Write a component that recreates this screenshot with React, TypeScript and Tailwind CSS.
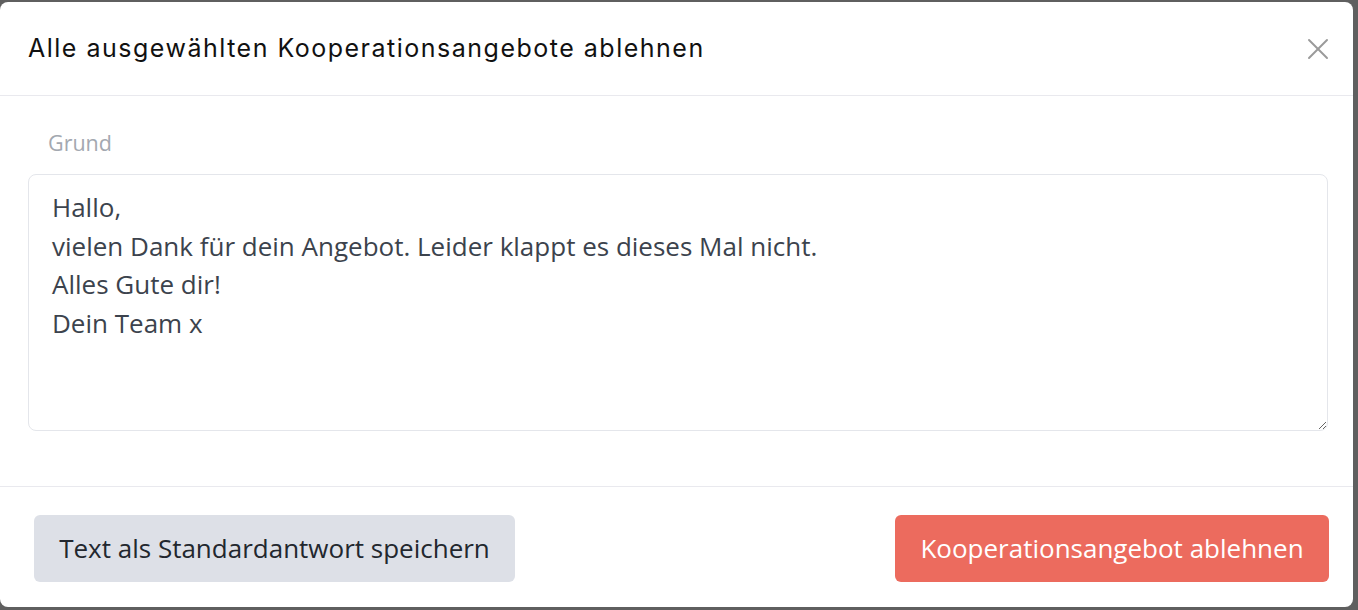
import { X } from 'lucide-react';

const reasonText = `Hallo,
vielen Dank für dein Angebot. Leider klappt es dieses Mal nicht.
Alles Gute dir!
Dein Team x`;

export default function App() {
  return (
    <div className="min-h-screen w-full bg-[#5f5f5f] pt-[2px]">
      <div className="flex h-[605px] w-[1353px] flex-col rounded-lg bg-white font-['Open_Sans',sans-serif]">
        {/* Header */}
        <div className="flex h-[94px] shrink-0 items-center justify-between border-b border-[#e9e9ee] pl-[28px] pr-[17px]">
          <h2 className="font-['Inter',sans-serif] text-[25px] font-normal tracking-[1.5px] text-[#111]">
            Alle ausgewählten Kooperationsangebote ablehnen
          </h2>
          <button type="button" className="text-[#9a9a9a]" aria-label="Schließen">
            <X size={36} strokeWidth={1.3} />
          </button>
        </div>

        {/* Body */}
        <div className="flex h-[390px] shrink-0 flex-col pl-[28px] pr-[25px] pt-[33px]">
          <label className="mb-[17px] pl-[20px] text-[21.5px] leading-[28px] text-[#a3a8b0]">
            Grund
          </label>
          <textarea
            defaultValue={reasonText}
            className="h-[257px] w-full resize-y rounded-lg border border-[#e4e6eb] pl-[23px] pt-[13px] text-[26px] leading-[38.5px] text-[#3c434d] outline-none"
          />
        </div>

        {/* Footer */}
        <div className="flex flex-1 items-start justify-between border-t border-[#e9e9ee] pl-[34px] pr-[24px] pt-[28px]">
          <button
            type="button"
            className="flex h-[67px] w-[481px] items-center justify-center rounded-md bg-[#dde0e7] text-[26px] text-[#22272e]"
          >
            Text als Standardantwort speichern
          </button>
          <button
            type="button"
            className="flex h-[67px] w-[434px] items-center justify-center rounded-md bg-[#ec6b5e] text-[26px] text-white"
          >
            Kooperationsangebot ablehnen
          </button>
        </div>
      </div>
    </div>
  );
}
